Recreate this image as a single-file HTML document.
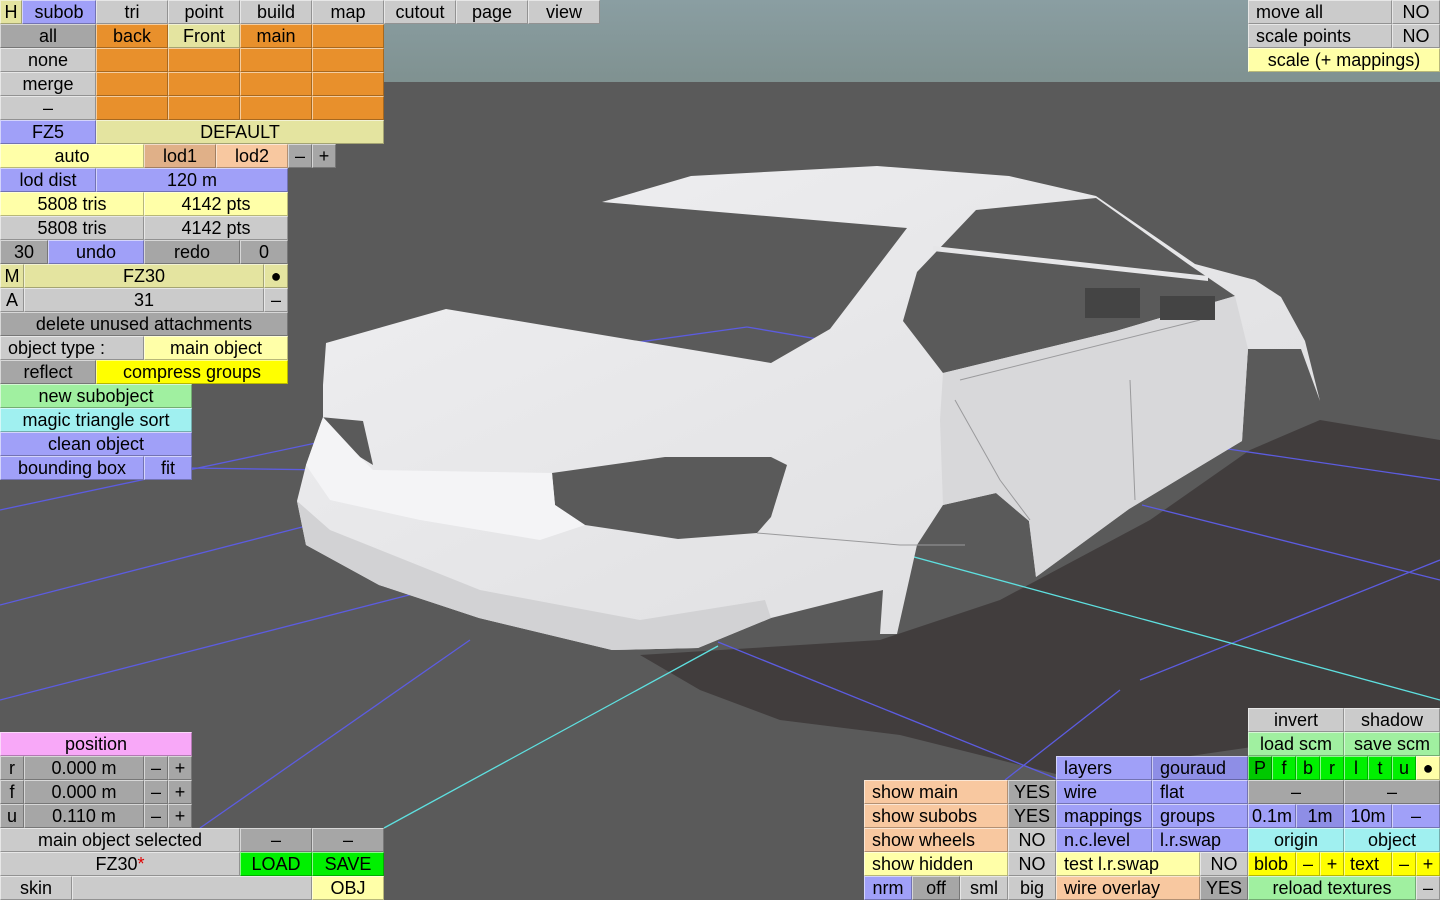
<!DOCTYPE html>
<html><head><meta charset="utf-8"><style>
html,body{margin:0;padding:0;width:1440px;height:900px;overflow:hidden;background:#5a5a5a;}
.b{position:absolute;height:24px;box-sizing:border-box;border-top:1px solid rgba(255,255,255,.55);border-left:1px solid rgba(255,255,255,.55);border-bottom:1px solid rgba(0,0,0,.28);border-right:1px solid rgba(0,0,0,.28);font:18px "Liberation Sans","DejaVu Sans",sans-serif;line-height:22px;text-align:center;color:#000;white-space:nowrap;overflow:hidden}
.l{text-align:left;padding-left:7px}
.g{background:#cbcbcb}.d{background:#a6a6a6}.bl{background:#a0a0f8}.bd{background:#8e8ee6}
.o{background:#e8902c}.py{background:#e4e4a0}.ly{background:#ffffa8}.y{background:#ffff00}
.gn{background:#a0f0a0}.gg{background:#00f000}.gp{background:#00c800}.c{background:#a0f0f0}
.pk{background:#f8a8f8}.pe{background:#f8c8a0}.tn{background:#e0b088}
</style></head><body>
<svg width="1440" height="900" style="position:absolute;left:0;top:0">
<defs><linearGradient id="sky" x1="0" y1="0" x2="0" y2="1"><stop offset="0" stop-color="#8a9ea2"/><stop offset="1" stop-color="#7f9190"/></linearGradient>
<linearGradient id="body" x1="0" y1="0" x2="1" y2="1"><stop offset="0" stop-color="#f0f0f2"/><stop offset="1" stop-color="#dcdcde"/></linearGradient></defs>
<rect x="0" y="0" width="1440" height="84" fill="url(#sky)"/>
<rect x="0" y="82" width="1440" height="818" fill="#5a5a5a"/>
<polygon points="640,655 880,640 1000,600 1150,520 1250,450 1320,420 1440,440 1440,720 1300,740 1060,775 900,735 780,720 700,690" fill="#413d3d"/>
<g stroke="#5c5ce0" stroke-width="1.3" fill="none">
<line x1="0" y1="510" x2="330" y2="440"/>
<line x1="0" y1="605" x2="310" y2="525"/>
<line x1="0" y1="700" x2="413" y2="594"/>
<line x1="190" y1="468" x2="330" y2="470"/>
<line x1="200" y1="828" x2="470" y2="640"/>
<line x1="718" y1="642" x2="1060" y2="780"/>
<line x1="1005" y1="780" x2="1120" y2="690"/>
<line x1="1140" y1="680" x2="1440" y2="560"/>
<line x1="1142" y1="505" x2="1440" y2="580"/>
<line x1="1228" y1="449" x2="1440" y2="480"/>
<line x1="560" y1="353" x2="747" y2="327"/>
<line x1="747" y1="327" x2="1000" y2="370"/>
</g>
<g stroke="#5ee0e0" stroke-width="1.3" fill="none">
<line x1="598" y1="471" x2="1440" y2="700"/>
<line x1="384" y1="828" x2="718" y2="646"/>
</g>
<polygon fill="url(#body)" points="323,385 326,343 446,309 771,363 830,329 907,228 602,202 691,176 877,166 1009,176 1096,196 1195,264 1255,280 1281,297 1305,341 1320,401 1301,349 1248,349 1242,441 1129,509 1036,577 1029,521 996,493 943,505 917,545 897,634 880,634 883,590 771,618 698,648 612,650 479,618 379,585 306,545 297,501 306,465 323,417"/>
<polygon fill="#5a5a5a" points="976,210 1096,198 1188,264 1235,296 1116,331 943,373 903,321 917,272"/>
<polygon fill="#e6e6e8" points="933,246 1208,276 1208,281 933,251"/>
<polygon fill="#5a5a5a" points="552,473 665,457 771,457 787,465 771,517 757,533 678,539 585,525 555,505"/>
<polygon fill="#5a5a5a" points="320,417 363,421 373,465 360,457"/>
<polygon fill="#f4f4f6" points="306,465 323,417 360,457 373,470 552,473 555,505 585,525 540,540 420,520 330,500"/>
<polygon fill="#d2d2d4" points="297,501 306,545 379,585 479,618 612,650 698,648 771,618 765,600 640,620 480,590 330,530"/>
<polygon fill="#d8d8da" points="943,373 1116,331 1235,296 1248,349 1242,441 1129,509 1036,577 1029,521 996,493 943,505 940,420"/>
<g stroke="#9a9a9c" fill="none" stroke-width="1"><path d="M757,533 L900,545 L965,545"/><path d="M960,380 L1200,320"/><path d="M1130,380 L1135,500"/><path d="M955,400 L1000,480 L1030,520"/></g>
<g fill="#444"><rect x="1085" y="288" width="55" height="30"/><rect x="1160" y="296" width="55" height="24"/></g>
</svg>

<div class="b py" style="left:0;top:0;width:22px">H</div>
<div class="b bl" style="left:22px;top:0;width:74px">subob</div>
<div class="b g" style="left:96px;top:0;width:72px">tri</div>
<div class="b g" style="left:168px;top:0;width:72px">point</div>
<div class="b g" style="left:240px;top:0;width:72px">build</div>
<div class="b g" style="left:312px;top:0;width:72px">map</div>
<div class="b g" style="left:384px;top:0;width:72px">cutout</div>
<div class="b g" style="left:456px;top:0;width:72px">page</div>
<div class="b g" style="left:528px;top:0;width:72px">view</div>

<div class="b d" style="left:0;top:24px;width:96px">all</div>
<div class="b o" style="left:96px;top:24px;width:72px">back</div>
<div class="b py" style="left:168px;top:24px;width:72px">Front</div>
<div class="b o" style="left:240px;top:24px;width:72px">main</div>
<div class="b o" style="left:312px;top:24px;width:72px"></div>
<div class="b g" style="left:0;top:48px;width:96px">none</div>
<div class="b o" style="left:96px;top:48px;width:72px"></div><div class="b o" style="left:168px;top:48px;width:72px"></div><div class="b o" style="left:240px;top:48px;width:72px"></div><div class="b o" style="left:312px;top:48px;width:72px"></div>
<div class="b g" style="left:0;top:72px;width:96px">merge</div>
<div class="b o" style="left:96px;top:72px;width:72px"></div><div class="b o" style="left:168px;top:72px;width:72px"></div><div class="b o" style="left:240px;top:72px;width:72px"></div><div class="b o" style="left:312px;top:72px;width:72px"></div>
<div class="b g" style="left:0;top:96px;width:96px">–</div>
<div class="b o" style="left:96px;top:96px;width:72px"></div><div class="b o" style="left:168px;top:96px;width:72px"></div><div class="b o" style="left:240px;top:96px;width:72px"></div><div class="b o" style="left:312px;top:96px;width:72px"></div>
<div class="b bl" style="left:0;top:120px;width:96px">FZ5</div>
<div class="b py" style="left:96px;top:120px;width:288px">DEFAULT</div>
<div class="b ly" style="left:0;top:144px;width:144px">auto</div>
<div class="b tn" style="left:144px;top:144px;width:72px">lod1</div>
<div class="b pe" style="left:216px;top:144px;width:72px">lod2</div>
<div class="b d" style="left:288px;top:144px;width:24px">–</div>
<div class="b d" style="left:312px;top:144px;width:24px">+</div>
<div class="b bl" style="left:0;top:168px;width:96px">lod dist</div>
<div class="b bl" style="left:96px;top:168px;width:192px">120 m</div>
<div class="b ly" style="left:0;top:192px;width:144px">5808 tris</div>
<div class="b ly" style="left:144px;top:192px;width:144px">4142 pts</div>
<div class="b g" style="left:0;top:216px;width:144px">5808 tris</div>
<div class="b g" style="left:144px;top:216px;width:144px">4142 pts</div>
<div class="b d" style="left:0;top:240px;width:48px">30</div>
<div class="b bl" style="left:48px;top:240px;width:96px">undo</div>
<div class="b d" style="left:144px;top:240px;width:96px">redo</div>
<div class="b d" style="left:240px;top:240px;width:48px">0</div>
<div class="b py" style="left:0;top:264px;width:24px">M</div>
<div class="b py" style="left:24px;top:264px;width:240px">FZ30</div>
<div class="b py" style="left:264px;top:264px;width:24px">●</div>
<div class="b g" style="left:0;top:288px;width:24px">A</div>
<div class="b g" style="left:24px;top:288px;width:240px">31</div>
<div class="b g" style="left:264px;top:288px;width:24px">–</div>
<div class="b d" style="left:0;top:312px;width:288px">delete unused attachments</div>
<div class="b g l" style="left:0;top:336px;width:144px">object type :</div>
<div class="b ly" style="left:144px;top:336px;width:144px">main object</div>
<div class="b d" style="left:0;top:360px;width:96px">reflect</div>
<div class="b y" style="left:96px;top:360px;width:192px">compress groups</div>
<div class="b gn" style="left:0;top:384px;width:192px">new subobject</div>
<div class="b c" style="left:0;top:408px;width:192px">magic triangle sort</div>
<div class="b bl" style="left:0;top:432px;width:192px">clean object</div>
<div class="b bl" style="left:0;top:456px;width:144px">bounding box</div>
<div class="b bl" style="left:144px;top:456px;width:48px">fit</div>

<div class="b pk" style="left:0;top:732px;width:192px">position</div>
<div class="b d" style="left:0;top:756px;width:24px">r</div><div class="b d" style="left:24px;top:756px;width:120px">0.000 m</div><div class="b d" style="left:144px;top:756px;width:24px">–</div><div class="b d" style="left:168px;top:756px;width:24px">+</div>
<div class="b d" style="left:0;top:780px;width:24px">f</div><div class="b d" style="left:24px;top:780px;width:120px">0.000 m</div><div class="b d" style="left:144px;top:780px;width:24px">–</div><div class="b d" style="left:168px;top:780px;width:24px">+</div>
<div class="b d" style="left:0;top:804px;width:24px">u</div><div class="b d" style="left:24px;top:804px;width:120px">0.110 m</div><div class="b d" style="left:144px;top:804px;width:24px">–</div><div class="b d" style="left:168px;top:804px;width:24px">+</div>
<div class="b g" style="left:0;top:828px;width:240px">main object selected</div>
<div class="b d" style="left:240px;top:828px;width:72px">–</div>
<div class="b d" style="left:312px;top:828px;width:72px">–</div>
<div class="b g" style="left:0;top:852px;width:240px">FZ30<span style="color:#e00000">*</span></div>
<div class="b gg" style="left:240px;top:852px;width:72px">LOAD</div>
<div class="b gg" style="left:312px;top:852px;width:72px">SAVE</div>
<div class="b g" style="left:0;top:876px;width:72px">skin</div>
<div class="b g" style="left:72px;top:876px;width:240px"></div>
<div class="b ly" style="left:312px;top:876px;width:72px">OBJ</div>

<div class="b g l" style="left:1248px;top:0;width:144px">move all</div>
<div class="b g" style="left:1392px;top:0;width:48px">NO</div>
<div class="b g l" style="left:1248px;top:24px;width:144px">scale points</div>
<div class="b g" style="left:1392px;top:24px;width:48px">NO</div>
<div class="b ly" style="left:1248px;top:48px;width:192px">scale (+ mappings)</div>

<div class="b g" style="left:1248px;top:708px;width:96px">invert</div>
<div class="b g" style="left:1344px;top:708px;width:96px">shadow</div>
<div class="b gn" style="left:1248px;top:732px;width:96px">load scm</div>
<div class="b gn" style="left:1344px;top:732px;width:96px">save scm</div>
<div class="b bl l" style="left:1056px;top:756px;width:96px">layers</div>
<div class="b bd l" style="left:1152px;top:756px;width:96px">gouraud</div>
<div class="b gp" style="left:1248px;top:756px;width:24px">P</div>
<div class="b gg" style="left:1272px;top:756px;width:24px">f</div>
<div class="b gg" style="left:1296px;top:756px;width:24px">b</div>
<div class="b gg" style="left:1320px;top:756px;width:24px">r</div>
<div class="b gg" style="left:1344px;top:756px;width:24px">l</div>
<div class="b gg" style="left:1368px;top:756px;width:24px">t</div>
<div class="b gg" style="left:1392px;top:756px;width:24px">u</div>
<div class="b ly" style="left:1416px;top:756px;width:24px">●</div>

<div class="b pe l" style="left:864px;top:780px;width:144px">show main</div>
<div class="b d" style="left:1008px;top:780px;width:48px">YES</div>
<div class="b bl l" style="left:1056px;top:780px;width:96px">wire</div>
<div class="b bl l" style="left:1152px;top:780px;width:96px">flat</div>
<div class="b d" style="left:1248px;top:780px;width:96px">–</div>
<div class="b d" style="left:1344px;top:780px;width:96px">–</div>

<div class="b pe l" style="left:864px;top:804px;width:144px">show subobs</div>
<div class="b d" style="left:1008px;top:804px;width:48px">YES</div>
<div class="b bl l" style="left:1056px;top:804px;width:96px">mappings</div>
<div class="b bl l" style="left:1152px;top:804px;width:96px">groups</div>
<div class="b bl" style="left:1248px;top:804px;width:48px">0.1m</div>
<div class="b bd" style="left:1296px;top:804px;width:48px">1m</div>
<div class="b bl" style="left:1344px;top:804px;width:48px">10m</div>
<div class="b bl" style="left:1392px;top:804px;width:48px">–</div>

<div class="b pe l" style="left:864px;top:828px;width:144px">show wheels</div>
<div class="b g" style="left:1008px;top:828px;width:48px">NO</div>
<div class="b bl l" style="left:1056px;top:828px;width:96px">n.c.level</div>
<div class="b bl l" style="left:1152px;top:828px;width:96px">l.r.swap</div>
<div class="b c" style="left:1248px;top:828px;width:96px">origin</div>
<div class="b c" style="left:1344px;top:828px;width:96px">object</div>

<div class="b ly l" style="left:864px;top:852px;width:144px">show hidden</div>
<div class="b g" style="left:1008px;top:852px;width:48px">NO</div>
<div class="b ly l" style="left:1056px;top:852px;width:144px">test l.r.swap</div>
<div class="b g" style="left:1200px;top:852px;width:48px">NO</div>
<div class="b y l" style="left:1248px;top:852px;width:48px;padding-left:5px">blob</div>
<div class="b y" style="left:1296px;top:852px;width:24px">–</div>
<div class="b y" style="left:1320px;top:852px;width:24px">+</div>
<div class="b y l" style="left:1344px;top:852px;width:48px;padding-left:5px">text</div>
<div class="b y" style="left:1392px;top:852px;width:24px">–</div>
<div class="b y" style="left:1416px;top:852px;width:24px">+</div>

<div class="b bl" style="left:864px;top:876px;width:48px">nrm</div>
<div class="b d" style="left:912px;top:876px;width:48px">off</div>
<div class="b g" style="left:960px;top:876px;width:48px">sml</div>
<div class="b g" style="left:1008px;top:876px;width:48px">big</div>
<div class="b pe l" style="left:1056px;top:876px;width:144px">wire overlay</div>
<div class="b d" style="left:1200px;top:876px;width:48px">YES</div>
<div class="b gn" style="left:1248px;top:876px;width:168px">reload textures</div>
<div class="b g" style="left:1416px;top:876px;width:24px">–</div>
</body></html>
